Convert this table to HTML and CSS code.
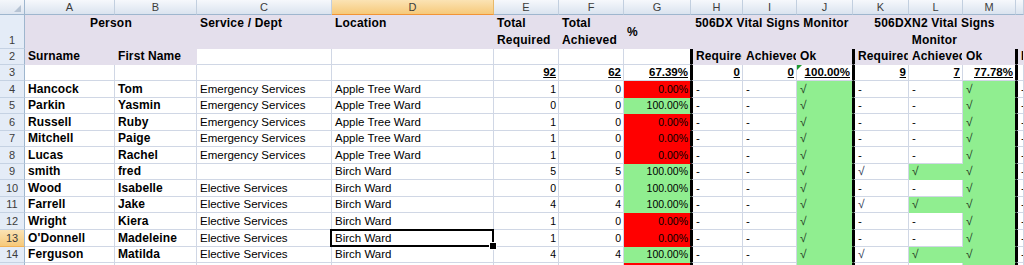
FILE: index.html
```html
<!DOCTYPE html>
<html>
<head>
<meta charset="utf-8">
<title>Vital Signs Training</title>
<link rel="stylesheet" href="styles.css">
</head>
<body>
<div class="sheet">
  <div class="row hdr">
    <div class="corner"><span class="tri"></span></div>
    <div class="ch">A</div><div class="ch">B</div><div class="ch">C</div><div class="ch on">D</div>
    <div class="ch">E</div><div class="ch">F</div><div class="ch">G</div><div class="ch">H</div>
    <div class="ch">I</div><div class="ch">J</div><div class="ch">K</div><div class="ch">L</div>
    <div class="ch">M</div><div class="ch"></div>
  </div>

  <div class="row r1">
    <div class="rh">1</div>
    <div class="t lav s2 ctr">Person</div>
    <div class="t lav">Service / Dept</div>
    <div class="t lav">Location</div>
    <div class="t lav">Total<br>Required</div>
    <div class="t lav">Total<br>Achieved</div>
    <div class="t lav mid">%</div>
    <div class="t lav s3 ctr">506DX Vital Signs Monitor</div>
    <div class="t lav s3 ctr">506DXN2 Vital Signs<br>Monitor</div>
    <div class="t lav"></div>
  </div>

  <div class="row h16">
    <div class="rh">2</div>
    <div class="c lav b">Surname</div>
    <div class="c lav b">First Name</div>
    <div class="c"></div><div class="c"></div><div class="c"></div><div class="c"></div>
    <div class="c tkr"></div>
    <div class="c lav b tkl">Required</div>
    <div class="c lav b">Achieved</div>
    <div class="c lav b tkr">Ok</div>
    <div class="c lav b tkl">Required</div>
    <div class="c lav b">Achieved</div>
    <div class="c lav b tkr">Ok</div>
    <div class="c lav b tkl">R</div>
  </div>

  <div class="row h16">
    <div class="rh">3</div>
    <div class="c"></div><div class="c"></div><div class="c"></div><div class="c"></div>
    <div class="c tot">92</div>
    <div class="c tot">62</div>
    <div class="c tot tkr">67.39%</div>
    <div class="c tot tkl">0</div>
    <div class="c tot">0</div>
    <div class="c tot tkr flag">100.00%</div>
    <div class="c tot tkl">9</div>
    <div class="c tot">7</div>
    <div class="c tot tkr">77.78%</div>
    <div class="c tkl"></div>
  </div>

  <div class="row h17">
    <div class="rh">4</div>
    <div class="c b">Hancock</div><div class="c b">Tom</div>
    <div class="c">Emergency Services</div><div class="c">Apple Tree Ward</div>
    <div class="c n">1</div><div class="c n">0</div><div class="c n red tkr">0.00%</div>
    <div class="c tkl">-</div><div class="c">-</div><div class="c ok tkr">√</div>
    <div class="c tkl">-</div><div class="c">-</div><div class="c ok tkr">√</div>
    <div class="c tkl">-</div>
  </div>

  <div class="row h16">
    <div class="rh">5</div>
    <div class="c b">Parkin</div><div class="c b">Yasmin</div>
    <div class="c">Emergency Services</div><div class="c">Apple Tree Ward</div>
    <div class="c n">0</div><div class="c n">0</div><div class="c n grn tkr">100.00%</div>
    <div class="c tkl">-</div><div class="c">-</div><div class="c ok tkr">√</div>
    <div class="c tkl">-</div><div class="c">-</div><div class="c ok tkr">√</div>
    <div class="c tkl">-</div>
  </div>

  <div class="row h17">
    <div class="rh">6</div>
    <div class="c b">Russell</div><div class="c b">Ruby</div>
    <div class="c">Emergency Services</div><div class="c">Apple Tree Ward</div>
    <div class="c n">1</div><div class="c n">0</div><div class="c n red tkr">0.00%</div>
    <div class="c tkl">-</div><div class="c">-</div><div class="c ok tkr">√</div>
    <div class="c tkl">-</div><div class="c">-</div><div class="c ok tkr">√</div>
    <div class="c tkl">-</div>
  </div>

  <div class="row h16">
    <div class="rh">7</div>
    <div class="c b">Mitchell</div><div class="c b">Paige</div>
    <div class="c">Emergency Services</div><div class="c">Apple Tree Ward</div>
    <div class="c n">1</div><div class="c n">0</div><div class="c n red tkr">0.00%</div>
    <div class="c tkl">-</div><div class="c">-</div><div class="c ok tkr">√</div>
    <div class="c tkl">-</div><div class="c">-</div><div class="c ok tkr">√</div>
    <div class="c tkl">-</div>
  </div>

  <div class="row h17">
    <div class="rh">8</div>
    <div class="c b">Lucas</div><div class="c b">Rachel</div>
    <div class="c">Emergency Services</div><div class="c">Apple Tree Ward</div>
    <div class="c n">1</div><div class="c n">0</div><div class="c n red tkr">0.00%</div>
    <div class="c tkl">-</div><div class="c">-</div><div class="c ok tkr">√</div>
    <div class="c tkl">-</div><div class="c">-</div><div class="c ok tkr">√</div>
    <div class="c tkl">-</div>
  </div>

  <div class="row h16">
    <div class="rh">9</div>
    <div class="c b">smith</div><div class="c b">fred</div>
    <div class="c"></div><div class="c">Birch Ward</div>
    <div class="c n">5</div><div class="c n">5</div><div class="c n grn tkr">100.00%</div>
    <div class="c tkl">-</div><div class="c">-</div><div class="c ok tkr">√</div>
    <div class="c tkl chk">√</div><div class="c ok">√</div><div class="c ok tkr">√</div>
    <div class="c tkl">-</div>
  </div>

  <div class="row h17">
    <div class="rh">10</div>
    <div class="c b">Wood</div><div class="c b">Isabelle</div>
    <div class="c">Elective Services</div><div class="c">Birch Ward</div>
    <div class="c n">0</div><div class="c n">0</div><div class="c n grn tkr">100.00%</div>
    <div class="c tkl">-</div><div class="c">-</div><div class="c ok tkr">√</div>
    <div class="c tkl">-</div><div class="c">-</div><div class="c ok tkr">√</div>
    <div class="c tkl">-</div>
  </div>

  <div class="row h16">
    <div class="rh">11</div>
    <div class="c b">Farrell</div><div class="c b">Jake</div>
    <div class="c">Elective Services</div><div class="c">Birch Ward</div>
    <div class="c n">4</div><div class="c n">4</div><div class="c n grn tkr">100.00%</div>
    <div class="c tkl">-</div><div class="c">-</div><div class="c ok tkr">√</div>
    <div class="c tkl chk">√</div><div class="c ok">√</div><div class="c ok tkr">√</div>
    <div class="c tkl">-</div>
  </div>

  <div class="row h17">
    <div class="rh">12</div>
    <div class="c b">Wright</div><div class="c b">Kiera</div>
    <div class="c">Elective Services</div><div class="c">Birch Ward</div>
    <div class="c n">1</div><div class="c n">0</div><div class="c n red tkr">0.00%</div>
    <div class="c tkl">-</div><div class="c">-</div><div class="c ok tkr">√</div>
    <div class="c tkl">-</div><div class="c">-</div><div class="c ok tkr">√</div>
    <div class="c tkl">-</div>
  </div>

  <div class="row h17">
    <div class="rh on">13</div>
    <div class="c b">O'Donnell</div><div class="c b">Madeleine</div>
    <div class="c">Elective Services</div><div class="c sel">Birch Ward</div>
    <div class="c n">1</div><div class="c n">0</div><div class="c n red tkr">0.00%</div>
    <div class="c tkl">-</div><div class="c">-</div><div class="c ok tkr">√</div>
    <div class="c tkl">-</div><div class="c">-</div><div class="c ok tkr">√</div>
    <div class="c tkl">-</div>
  </div>

  <div class="row h16">
    <div class="rh">14</div>
    <div class="c b">Ferguson</div><div class="c b">Matilda</div>
    <div class="c">Elective Services</div><div class="c">Birch Ward</div>
    <div class="c n">4</div><div class="c n">4</div><div class="c n grn tkr">100.00%</div>
    <div class="c tkl">-</div><div class="c">-</div><div class="c ok tkr">√</div>
    <div class="c tkl chk">√</div><div class="c ok">√</div><div class="c ok tkr">√</div>
    <div class="c tkl">-</div>
  </div>

  <div class="row h2">
    <div class="rh"></div>
    <div class="c"></div><div class="c"></div><div class="c"></div><div class="c"></div>
    <div class="c"></div><div class="c"></div><div class="c red tkr"></div>
    <div class="c tkl"></div><div class="c"></div><div class="c ok tkr"></div>
    <div class="c tkl"></div><div class="c"></div><div class="c ok tkr"></div>
    <div class="c tkl"></div>
  </div>
</div>
</body>
</html>
```

FILE: styles.css
```css
* { box-sizing: border-box; }

body {
  margin: 0;
  width: 1024px;
  height: 265px;
  overflow: hidden;
  background: #ffffff;
  font-family: "Liberation Sans", Arial, sans-serif;
  color: #000;
}

.sheet { width: 1024px; overflow: hidden; }

.row {
  display: grid;
  grid-template-columns: 25px 90px 82px 135px 162px 65px 65px 67px 52px 54px 56px 56px 54px 53px 8px;
}

.hdr { height: 15px; }
.r1 { height: 34px; }
.h16 { height: 16px; }
.h17 { height: 17px; }
.h2 { height: 2px; overflow: hidden; }
.h2 > div { border-bottom: 0; }

/* column headers */
.corner {
  position: relative;
  background: linear-gradient(#f4f7fb, #dde5f0);
  border-right: 1px solid #9eb6ce;
  border-bottom: 1px solid #9eb6ce;
}
.corner .tri {
  position: absolute;
  right: 3px;
  bottom: 2px;
  width: 0;
  height: 0;
  border-left: 7px solid transparent;
  border-bottom: 7px solid #b6c3d3;
}
.ch {
  background: linear-gradient(#f6f8fc, #dae3ef);
  border-right: 1px solid #c2cfdf;
  border-bottom: 1px solid #9eb6ce;
  font-size: 11px;
  line-height: 14px;
  color: #3c3c3c;
  text-align: center;
}
.ch.on {
  background: linear-gradient(#fbe3b4, #f6c97a);
  border-bottom-color: #f29436;
  border-right-color: #e8b96a;
}

/* row headers */
.rh {
  background: #e4ecf7;
  border-right: 1px solid #9eb6ce;
  border-bottom: 1px solid #c5d2e3;
  font-size: 11px;
  line-height: 13px;
  color: #3c3c3c;
  display: flex;
  align-items: flex-end;
  justify-content: center;
  padding-bottom: 1px;
  overflow: hidden;
}
.rh.on {
  background: linear-gradient(#fbe3b4, #f6c97a);
  border-bottom-color: #f2b256;
}

/* row 1 titles */
.t {
  border-right: 1px solid #e4dfec;
  border-bottom: 1px solid #e4dfec;
  padding: 0 2px 0 3px;
  font-size: 12px;
  font-weight: bold;
  line-height: 17px;
  letter-spacing: 0.2px;
  white-space: nowrap;
  overflow: hidden;
}
.s2 { grid-column: span 2; }
.s3 { grid-column: span 3; }
.ctr { text-align: center; }
.mid { line-height: 35px; }

/* cells */
.c {
  border-right: 1px solid #d0d7e5;
  border-bottom: 1px solid #d0d7e5;
  padding: 0 2px 1px 3px;
  font-size: 11.5px;
  line-height: 13px;
  white-space: nowrap;
  overflow: hidden;
  display: flex;
  align-items: flex-end;
}
.b { font-weight: bold; font-size: 12px; letter-spacing: 0.1px; }
.n { justify-content: flex-end; font-size: 10.5px; padding-right: 2px; }
.tot {
  justify-content: flex-end;
  font-weight: bold;
  font-size: 11.5px;
  text-decoration: underline;
  padding-right: 2px;
}

.lav { background: #e4dfec; border-color: #e4dfec; }
.red { background: #ff0000; border-bottom-color: #ff0000; }
.grn { background: #90ee90; border-bottom-color: #90ee90; }
.ok {
  background: #90ee90;
  border-bottom-color: #90ee90;
  border-right-color: #90ee90;
  color: #263b26;
  font-size: 12px;
}
.chk { color: #2d3550; font-size: 12px; }

.tkr { border-right: 1px solid #000; }
.tkl { border-left: 2px solid #000; }

.flag { position: relative; }
.flag::before {
  content: "";
  position: absolute;
  left: 0;
  top: 0;
  width: 0;
  height: 0;
  border-top: 5px solid #1f9a33;
  border-right: 5px solid transparent;
}

.sel {
  position: relative;
  overflow: visible;
}
.sel::after {
  content: "";
  position: absolute;
  left: -2px;
  top: -1px;
  right: -1px;
  bottom: -1px;
  border: 2px solid #000;
}
.sel::before {
  content: "";
  position: absolute;
  right: -4px;
  bottom: -4px;
  width: 6px;
  height: 6px;
  background: #000;
  border: 1px solid #fff;
  z-index: 1;
}
```
